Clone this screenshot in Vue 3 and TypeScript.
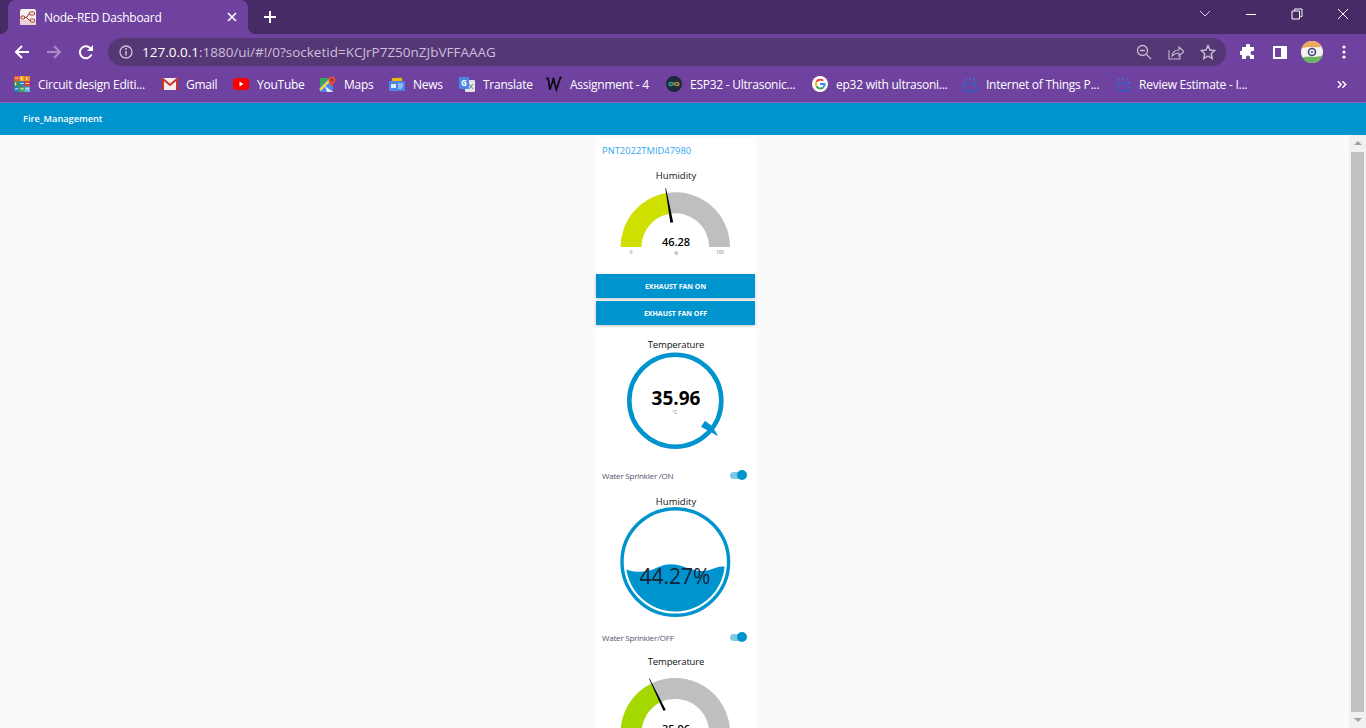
<template>
  <div class="page">
    <div class="tabstrip">
      <div class="tab">
        <svg class="favicon" width="16" height="16" viewBox="0 0 16 16">
          <rect width="16" height="16" rx="2" fill="#f6f0f0" />
          <rect y="11" width="16" height="5" rx="1" fill="#e9d5d5" />
          <path d="M4.500 8.500h1.500c2 0 1.500-4 3.500-4M4.500 8.500h1.500c2 0 2 3 4.500 3" fill="none" stroke="#a8302f" />
          <rect x="9.500" y="3" width="5" height="3" rx=".8" fill="#f6f0f0" stroke="#a8302f" />
          <rect x="10.500" y="10" width="4" height="3" rx=".8" fill="#f6f0f0" stroke="#a8302f" />
          <rect x="1" y="7" width="3.500" height="3" rx=".8" fill="#f6f0f0" stroke="#a8302f" />
        </svg>
        <span class="tab-title">Node-RED Dashboard</span>
        <svg class="tab-close" width="10" height="10" viewBox="0 0 10 10">
          <path d="M1 1l8 8M9 1l-8 8" stroke="#fff" stroke-width="1.600" />
        </svg>
      </div>
      <svg class="new-tab" width="14" height="14" viewBox="0 0 14 14">
        <path d="M7 1v12M1 7h12" stroke="#fff" stroke-width="2" />
      </svg>
      <div class="window-controls">
        <span class="win-btn">
          <svg width="12" height="8" viewBox="0 0 12 8"><path d="M1 1l5 5 5-5" fill="none" stroke="#d9cfe6" /></svg>
        </span>
        <span class="win-btn">
          <svg width="12" height="12" viewBox="0 0 12 12"><path d="M1 6.500h10" stroke="#fff" /></svg>
        </span>
        <span class="win-btn">
          <svg width="12" height="12" viewBox="0 0 12 12">
            <path d="M3.500 2.500v-1.500h7.500v7.500h-1.500M1 3h7.500v8h-7.500z" fill="none" stroke="#fff" />
          </svg>
        </span>
        <span class="win-btn">
          <svg width="12" height="12" viewBox="0 0 12 12"><path d="M1 1l10 10M11 1l-10 10" stroke="#fff" /></svg>
        </span>
      </div>
    </div>

    <div class="toolbar">
      <span class="tool-btn">
        <svg width="16" height="16" viewBox="0 0 16 16">
          <path d="M15 8h-13M8 2l-6 6 6 6" fill="none" stroke="#fff" stroke-width="2" />
        </svg>
      </span>
      <span class="tool-btn">
        <svg width="16" height="16" viewBox="0 0 16 16">
          <path d="M1 8h13M8 2l6 6-6 6" fill="none" stroke="#a58dc4" stroke-width="2" />
        </svg>
      </span>
      <span class="tool-btn">
        <svg width="16" height="16" viewBox="0 0 16 16">
          <path d="M13.500 10.500a6 6 0 1 1-.6-5.500" fill="none" stroke="#fff" stroke-width="2" />
          <path d="M15 1v6h-6z" fill="#fff" />
        </svg>
      </span>
      <div class="urlbar">
        <svg class="url-info" width="14" height="14" viewBox="0 0 14 14">
          <circle cx="7" cy="7" r="6" fill="none" stroke="#cdc3da" stroke-width="1.300" />
          <path d="M7 6v4.500" stroke="#cdc3da" stroke-width="1.500" />
          <circle cx="7" cy="4" r="1" fill="#cdc3da" />
        </svg>
        <span class="url-text"><span class="url-host">127.0.0.1</span>:1880/ui/#!/0?socketid=KCJrP7Z50nZJbVFFAAAG</span>
        <span class="url-action">
          <svg width="16" height="16" viewBox="0 0 16 16">
            <circle cx="6.500" cy="6.500" r="5" fill="none" stroke="#c4bad1" stroke-width="1.300" />
            <path d="M10.500 10.500l4.500 4.500M4 6.500h5" stroke="#c4bad1" stroke-width="1.300" />
          </svg>
        </span>
        <span class="url-action">
          <svg width="16" height="16" viewBox="0 0 16 16">
            <path d="M1 6v9h11v-3" fill="none" stroke="#c4bad1" stroke-width="1.100" />
            <path d="M4 12c.5-4 3-6 7-6V3l5 4.500-5 4.500V9c-3 0-5 1-7 3z" fill="none" stroke="#c4bad1" stroke-width="1.100" />
          </svg>
        </span>
        <span class="url-action">
          <svg width="16" height="16" viewBox="0 0 16 16">
            <path d="M8 1.500l2 4.500 4.800.5-3.600 3.200 1 4.800-4.200-2.500-4.200 2.500 1-4.800-3.600-3.200 4.800-.5z" fill="none" stroke="#c9bfd6" stroke-width="1.400" />
          </svg>
        </span>
      </div>
      <span class="tool-btn">
        <svg width="16" height="16" viewBox="0 0 16 16">
          <path d="M6 1.500a2 2 0 0 1 4 0V3h4v4h-1.500a2 2 0 0 0 0 4H14v4H10v-1.500a2 2 0 0 0-4 0V15H2v-4H.5a2 2 0 0 1 0-4H2V3h4z" fill="#fff" />
        </svg>
      </span>
      <span class="tool-btn">
        <svg width="14" height="13" viewBox="0 0 14 13">
          <path d="M0 0h14v13H0zM2 2v9h6V2z" fill="#fff" fill-rule="evenodd" />
        </svg>
      </span>
      <span class="tool-btn">
        <svg width="22" height="22" viewBox="0 0 22 22">
          <defs><clipPath id="avatar"><circle cx="11" cy="11" r="11" /></clipPath></defs>
          <g clip-path="url(#avatar)">
            <rect width="22" height="22" fill="#f4f2ec" />
            <path d="M0 0h22v5c-6 3-14-1-22 3z" fill="#efa85c" />
            <path d="M0 17c8-3 14 1 22-3v8H0z" fill="#68b561" />
          </g>
          <circle cx="11" cy="11" r="3.500" fill="none" stroke="#3a3f8f" stroke-width="1.600" />
          <circle cx="11" cy="11" r="1" fill="#3a3f8f" />
        </svg>
      </span>
      <span class="tool-btn">
        <svg width="4" height="14" viewBox="0 0 4 14">
          <circle cx="2" cy="2" r="1.600" fill="#fff" />
          <circle cx="2" cy="7" r="1.600" fill="#fff" />
          <circle cx="2" cy="12" r="1.600" fill="#fff" />
        </svg>
      </span>
    </div>

    <div class="bookmarks">
      <div v-for="b in bookmarks" :key="b.label" class="bookmark" :style="{ width: b.width + 'px' }">
        <svg v-if="b.icon === 'tinkercad'" class="bm-icon" width="16" height="16" viewBox="0 0 15 15">
          <rect width="5" height="5" fill="#e8562a" />
          <rect x="5" width="5" height="5" fill="#f5a623" />
          <rect x="10" width="5" height="5" fill="#f08a24" />
          <rect y="5" width="5" height="5" fill="#3f9c45" />
          <rect x="5" y="5" width="5" height="5" fill="#2f7fc1" />
          <rect x="10" y="5" width="5" height="5" fill="#e23c2f" />
          <rect y="10" width="5" height="5" fill="#1f7fc4" />
          <rect x="5" y="10" width="5" height="5" fill="#49a84c" />
          <rect x="10" y="10" width="5" height="5" fill="#5eb7e0" />
          <path d="M1 2h3M7 1v3M12 1v3M1.500 6v3M6 7h3M11 7h3M1 12h3M6 12h3M11 12h3" stroke="#fff" stroke-width=".8" />
        </svg>
        <svg v-else-if="b.icon === 'gmail'" class="bm-icon" width="16" height="14" viewBox="0 0 16 14">
          <rect x=".5" y="1" width="15" height="12" fill="#f3eeee" />
          <path d="M1 13V2l7 6 7-6v11" fill="none" stroke="#c5352b" stroke-width="2" />
        </svg>
        <svg v-else-if="b.icon === 'youtube'" class="bm-icon" width="16" height="12" viewBox="0 0 16 12">
          <rect width="16" height="12" rx="3" fill="#f00" />
          <path d="M6.500 3.500v5l4-2.500z" fill="#fff" />
        </svg>
        <svg v-else-if="b.icon === 'maps'" class="bm-icon" width="17" height="16" viewBox="0 0 17 16">
          <rect x="1" y="2" width="13" height="14" fill="#4a87e8" />
          <path d="M1 2h9L1 11z" fill="#35a853" />
          <path d="M1 14L12 3" stroke="#f4d24a" stroke-width="2.500" />
          <path d="M8 16l-2-6 8 6z" fill="#e9edf2" />
          <circle cx="13" cy="4" r="3.500" fill="#dd4b3e" />
          <path d="M10.500 6l2.500 5 2.500-5z" fill="#dd4b3e" />
          <circle cx="13" cy="4" r="1.200" fill="#8c2a22" />
        </svg>
        <svg v-else-if="b.icon === 'news'" class="bm-icon" width="16" height="14" viewBox="0 0 16 14">
          <path d="M2 2l10-2 1 4H3z" fill="#35a853" />
          <rect x="3" y="1" width="10" height="3" fill="#f4b400" />
          <rect y="4" width="16" height="10" rx="1" fill="#4a87e8" />
          <rect x="2" y="7" width="5" height="4" fill="#dbe7fb" />
          <path d="M9 7h5M9 9h5M9 11h4" stroke="#dbe7fb" />
        </svg>
        <svg v-else-if="b.icon === 'translate'" class="bm-icon" width="16" height="15" viewBox="0 0 16 15">
          <rect x="6" y="3" width="10" height="12" rx="1" fill="#dfe3ea" />
          <rect width="10" height="12" rx="1" fill="#4a87e8" />
          <text x="5" y="9" class="bm-letter">G</text>
          <path d="M10 7l4 5M14 7l-4 5" stroke="#7c8696" />
        </svg>
        <svg v-else-if="b.icon === 'wordwall'" class="bm-icon" width="16" height="16" viewBox="0 0 17 16">
          <path d="M1 2c2 0 2 4 3 12l4-11 3 11 3-9c1-2 1-4 2-4" fill="none" stroke="#0c0a12" stroke-width="1.800" />
          <circle cx="1.500" cy="2" r="1.300" fill="#0c0a12" />
          <circle cx="8" cy="3" r="1.300" fill="#0c0a12" />
          <circle cx="15.500" cy="1.500" r="1.300" fill="#0c0a12" />
        </svg>
        <svg v-else-if="b.icon === 'esp'" class="bm-icon" width="16" height="16" viewBox="0 0 16 16">
          <circle cx="8" cy="8" r="8" fill="#1d2a3a" />
          <path d="M8 8c-1.500-2-4.500-2-5 0s3.500 2 5 0" fill="none" stroke="#2fa6a0" stroke-width="1.300" />
          <path d="M8 8c1.500-2 4.500-2 5 0s-3.500 2-5 0" fill="none" stroke="#b98a3c" stroke-width="1.300" />
        </svg>
        <svg v-else-if="b.icon === 'google'" class="bm-icon" width="16" height="16" viewBox="0 0 16 16">
          <circle cx="8" cy="8" r="8" fill="#fff" />
          <path d="M11.300 4.700a4.700 4.700 0 0 0-6.900 1.100" fill="none" stroke="#ea4335" stroke-width="1.900" />
          <path d="M4.400 5.800a4.700 4.700 0 0 0 0 4.400" fill="none" stroke="#fbbc05" stroke-width="1.900" />
          <path d="M4.400 10.200a4.700 4.700 0 0 0 6.700 1.400" fill="none" stroke="#34a853" stroke-width="1.900" />
          <path d="M11.100 11.600a4.500 4.500 0 0 0 1.500-3.600H8" fill="none" stroke="#4285f4" stroke-width="1.900" />
        </svg>
        <svg v-else-if="b.icon === 'ibm'" class="bm-icon" width="16" height="16" viewBox="0 0 16 16">
          <path d="M4 15h8.500a2.700 2.700 0 0 0 .5-5.300A4 4 0 0 0 6 8a3.500 3.500 0 0 0-2 7z" fill="none" stroke="#2f62c4" stroke-width="1.300" />
          <path d="M8 1v2.500M3.500 2.500l1 2M12.500 2.500l-1 2M1 6l2 .8M15 6l-2 .8" stroke="#3f74d6" stroke-width="1.300" />
        </svg>
        <span class="bm-label">{{ b.label }}</span>
      </div>
      <svg class="bm-more" width="10" height="9" viewBox="0 0 11 9">
        <path d="M1 1l3.500 3.500L1 8M6 1l3.500 3.500L6 8" fill="none" stroke="#fff" stroke-width="1.700" />
      </svg>
    </div>

    <div class="ui-header">Fire_Management</div>

    <div class="ui-main">
      <div class="ui-content">
        <div class="card">
          <div class="group-title">PNT2022TMID47980</div>

          <div class="widget-label first">Humidity</div>
          <svg class="widget-svg" width="160" height="72" viewBox="0 0 160 72">
            <path :d="humidityGauge.rest" fill="#bfbfbf" />
            <path :d="humidityGauge.fill" fill="#cfdf00" />
            <polygon points="69.300,4.300 70,4.300 77.200,38.200 74.300,38.700" fill="#000" />
            <text x="80" y="62" class="gauge-value">46.28</text>
            <text x="80" y="71" class="gauge-unit">%</text>
            <text x="35" y="70" class="gauge-unit">0</text>
            <text x="124" y="70" class="gauge-unit">100</text>
          </svg>

          <button class="ui-button first">EXHAUST FAN ON</button>
          <button class="ui-button">EXHAUST FAN OFF</button>

          <div class="widget-label donut-label">Temperature</div>
          <svg class="widget-svg" width="160" height="100" viewBox="0 0 160 100">
            <circle cx="79.300" cy="48.700" r="46" fill="none" stroke="#0094ce" stroke-width="4.600" />
            <polygon points="109,68.700 105,74.700 122.300,84.300 116,74" fill="#0094ce" />
            <text x="80" y="53" class="donut-value">35.96</text>
            <text x="79" y="62" class="gauge-unit">°C</text>
          </svg>

          <div class="switch-row first">
            <span class="switch-text">Water Sprinkler /ON</span>
            <span class="switch"><span class="switch-thumb"></span></span>
          </div>

          <div class="widget-label tight">Humidity</div>
          <svg class="widget-svg liquid" width="160" height="112" viewBox="0 0 160 112">
            <defs><clipPath id="liquid-clip"><circle cx="79.300" cy="55" r="49.500" /></clipPath></defs>
            <circle cx="79.300" cy="55" r="53.300" fill="none" stroke="#0094ce" stroke-width="3.400" />
            <path
              clip-path="url(#liquid-clip)"
              d="M28 61.500C38 66 50 66 60 61S78 56 90 60.500 108 65 116 62 126 59 132 60V112H28z"
              fill="#0094ce"
            />
            <text x="79" y="77" class="liquid-value">44.27%</text>
          </svg>

          <div class="switch-row second">
            <span class="switch-text">Water Sprinkler/OFF</span>
            <span class="switch"><span class="switch-thumb"></span></span>
          </div>

          <div class="widget-label last">Temperature</div>
          <svg class="widget-svg" width="160" height="72" viewBox="0 0 160 72">
            <path :d="tempGauge.rest" fill="#bfbfbf" />
            <path :d="tempGauge.fill" fill="#a4d800" />
            <polygon points="53,9.800 53.600,9.500 69.800,41 67.400,41.800" fill="#000" />
            <text x="80" y="64" class="gauge-value">35.96</text>
          </svg>
        </div>
      </div>
      <div class="scrollbar">
        <span class="scroll-up"></span>
        <span class="scroll-thumb"></span>
        <span class="scroll-down"></span>
      </div>
    </div>
  </div>
</template>

<script setup lang="ts">
interface Bookmark {
  label: string
  icon: string
  width: number
}

const bookmarks: Bookmark[] = [
  { label: 'Circuit design Editi...', icon: 'tinkercad', width: 148 },
  { label: 'Gmail', icon: 'gmail', width: 71 },
  { label: 'YouTube', icon: 'youtube', width: 86 },
  { label: 'Maps', icon: 'maps', width: 70 },
  { label: 'News', icon: 'news', width: 70 },
  { label: 'Translate', icon: 'translate', width: 87 },
  { label: 'Assignment - 4', icon: 'wordwall', width: 120 },
  { label: 'ESP32 - Ultrasonic...', icon: 'esp', width: 146 },
  { label: 'ep32 with ultrasoni...', icon: 'google', width: 150 },
  { label: 'Internet of Things P...', icon: 'ibm', width: 153 },
  { label: 'Review Estimate - I...', icon: 'ibm', width: 150 }
]

// ring segment between two angles, 0 is the left end of the gauge and 180 the right end
function ringPath(cx: number, cy: number, outer: number, inner: number, from: number, to: number): string {
  const point = (r: number, deg: number) => {
    const a = (deg * Math.PI) / 180
    return `${(cx - r * Math.cos(a)).toFixed(2)} ${(cy - r * Math.sin(a)).toFixed(2)}`
  }
  return `M${point(outer, from)}A${outer} ${outer} 0 0 1 ${point(outer, to)}L${point(inner, to)}A${inner} ${inner} 0 0 0 ${point(inner, from)}Z`
}

function gauge(cy: number, angle: number) {
  return {
    fill: ringPath(79.3, cy, 54.7, 33.8, 0, angle),
    rest: ringPath(79.3, cy, 54.7, 33.8, angle, 180)
  }
}

const humidityGauge = gauge(63, 80.5)
const tempGauge = gauge(63.7, 64)
</script>

<style>
html,
body {
  margin: 0;
  overflow: hidden;
}
</style>

<style scoped>
.page {
  display: flex;
  flex-direction: column;
  width: 1366px;
  height: 728px;
  overflow: hidden;
  font-family: "Open Sans", "Noto Sans", sans-serif;
  background: #fafafa;
}

.tabstrip {
  display: flex;
  align-items: flex-end;
  flex: none;
  height: 34px;
  padding-left: 8px;
  background: #462b66;
}

.tab {
  position: relative;
  display: flex;
  align-items: center;
  width: 240px;
  height: 34px;
  box-sizing: border-box;
  padding: 0 11px 0 12px;
  border-radius: 8px 8px 0 0;
  background: #6f42a0;
  color: #fff;
}

.tab::before,
.tab::after {
  content: "";
  position: absolute;
  bottom: 0;
  width: 8px;
  height: 8px;
}

.tab::before {
  left: -8px;
  background: radial-gradient(circle at 0 0, transparent 8px, #6f42a0 8.5px);
}

.tab::after {
  right: -8px;
  background: radial-gradient(circle at 100% 0, transparent 8px, #6f42a0 8.5px);
}

.favicon {
  flex: none;
}

.tab-title {
  flex: 1;
  margin-left: 8px;
  font-size: 12px;
  letter-spacing: -0.25px;
}

.new-tab {
  margin: 0 0 10px 15px;
}

.window-controls {
  display: flex;
  margin-left: auto;
  align-self: flex-start;
}

.win-btn {
  display: flex;
  align-items: center;
  justify-content: center;
  width: 46px;
  height: 28px;
}

.toolbar {
  display: flex;
  align-items: center;
  flex: none;
  height: 32px;
  box-sizing: border-box;
  padding: 4px 6px 0;
  background: #6f42a0;
}

.tool-btn {
  display: flex;
  align-items: center;
  justify-content: center;
  flex: none;
  width: 32px;
  height: 28px;
}

.urlbar {
  display: flex;
  align-items: center;
  flex: 1;
  height: 28px;
  margin: 0 6px;
  padding: 0 2px 0 11px;
  border-radius: 14px;
  background: #553776;
}

.url-info {
  flex: none;
}

.url-text {
  flex: 1;
  margin-left: 9px;
  font-size: 13.500px;
  color: #cbbfdb;
  white-space: nowrap;
}

.url-host {
  color: #fff;
}

.url-action {
  display: flex;
  align-items: center;
  justify-content: center;
  width: 32px;
  height: 28px;
}

.bookmarks {
  display: flex;
  align-items: center;
  flex: none;
  height: 37px;
  box-sizing: border-box;
  padding-left: 14px;
  border-bottom: 1px solid #8a66b3;
  background: #6f42a0;
}

.bookmark {
  display: flex;
  align-items: center;
  flex: none;
  height: 100%;
}

.bm-icon {
  flex: none;
}

.bm-label {
  margin-left: 8px;
  font-size: 12px;
  letter-spacing: -0.25px;
  color: #fff;
  white-space: nowrap;
}

.bm-letter {
  font-family: "Open Sans", sans-serif;
  font-size: 8px;
  font-weight: 700;
  fill: #fff;
  text-anchor: middle;
}

.bm-more {
  margin-left: 72px;
}

.ui-header {
  flex: none;
  height: 32px;
  box-sizing: border-box;
  padding-left: 23px;
  background: #0094ce;
  color: #fff;
  font-size: 9.200px;
  font-weight: 600;
  line-height: 32px;
}

.ui-main {
  display: flex;
  flex: 1;
  min-height: 0;
}

.ui-content {
  flex: 1;
  min-width: 0;
  padding: 3px 0 0 596px;
  overflow: hidden;
}

.card {
  width: 160px;
  padding-bottom: 40px;
  background: #fff;
}

.group-title {
  padding: 1px 0 0 6px;
  color: #2ea7f0;
  font-size: 9.400px;
  line-height: 23px;
}

.widget-label {
  color: #111;
  font-size: 9.500px;
  letter-spacing: -0.15px;
  line-height: 15px;
  text-align: center;
}

.widget-label.first {
  margin-top: 5px;
  line-height: 17px;
  letter-spacing: 0;
}

.widget-label.donut-label {
  margin-top: 12px;
  line-height: 15px;
}

.widget-label.tight {
  margin-top: 7px;
  line-height: 13px;
  letter-spacing: 0;
}

.widget-label.last {
  margin-top: 4px;
}

.widget-svg {
  display: block;
}

.widget-svg.liquid {
  margin-top: -1px;
}

.gauge-value {
  font-size: 11px;
  font-weight: 600;
  fill: #000;
  text-anchor: middle;
}

.gauge-unit {
  font-size: 4.500px;
  fill: #777;
  text-anchor: middle;
}

.donut-value {
  font-size: 19px;
  font-weight: 700;
  fill: #000;
  text-anchor: middle;
}

.liquid-value {
  font-size: 21px;
  fill: #14243a;
  text-anchor: middle;
}

.ui-button {
  display: block;
  width: 159px;
  height: 24px;
  margin: 3px 0 0;
  padding: 0;
  border: none;
  background: #0094ce;
  box-shadow: 0 1px 3px rgba(0, 0, 0, 0.25);
  color: #fff;
  font-family: inherit;
  font-size: 7px;
  font-weight: 700;
}

.ui-button.first {
  margin-top: 18px;
}

.switch-row {
  display: flex;
  align-items: center;
  justify-content: space-between;
  height: 24px;
  padding: 0 10px 0 6px;
  color: #55506f;
  font-size: 8px;
  letter-spacing: -0.2px;
}

.switch-text {
  margin-top: -1px;
}

.switch-row.first {
  margin-top: 12px;
}

.switch-row.second {
  margin-top: 7px;
}

.switch {
  position: relative;
  display: block;
  width: 16px;
  height: 7px;
  margin-top: -2px;
  border-radius: 4px;
  background: #80c9e6;
}

.switch-thumb {
  position: absolute;
  top: -1.500px;
  right: -1px;
  width: 10px;
  height: 10px;
  border-radius: 50%;
  background: #0094ce;
}

.scrollbar {
  flex: none;
  display: flex;
  flex-direction: column;
  align-items: center;
  width: 17px;
  background: #f1f1f1;
}

.scroll-up {
  margin-top: 6px;
  border-right: 4px solid transparent;
  border-bottom: 4px solid #a3a3a3;
  border-left: 4px solid transparent;
}

.scroll-thumb {
  width: 13px;
  height: 560px;
  margin-top: 7px;
  background: #c1c1c1;
}

.scroll-down {
  margin-top: 6px;
  border-top: 4px solid #a3a3a3;
  border-right: 4px solid transparent;
  border-left: 4px solid transparent;
}
</style>
